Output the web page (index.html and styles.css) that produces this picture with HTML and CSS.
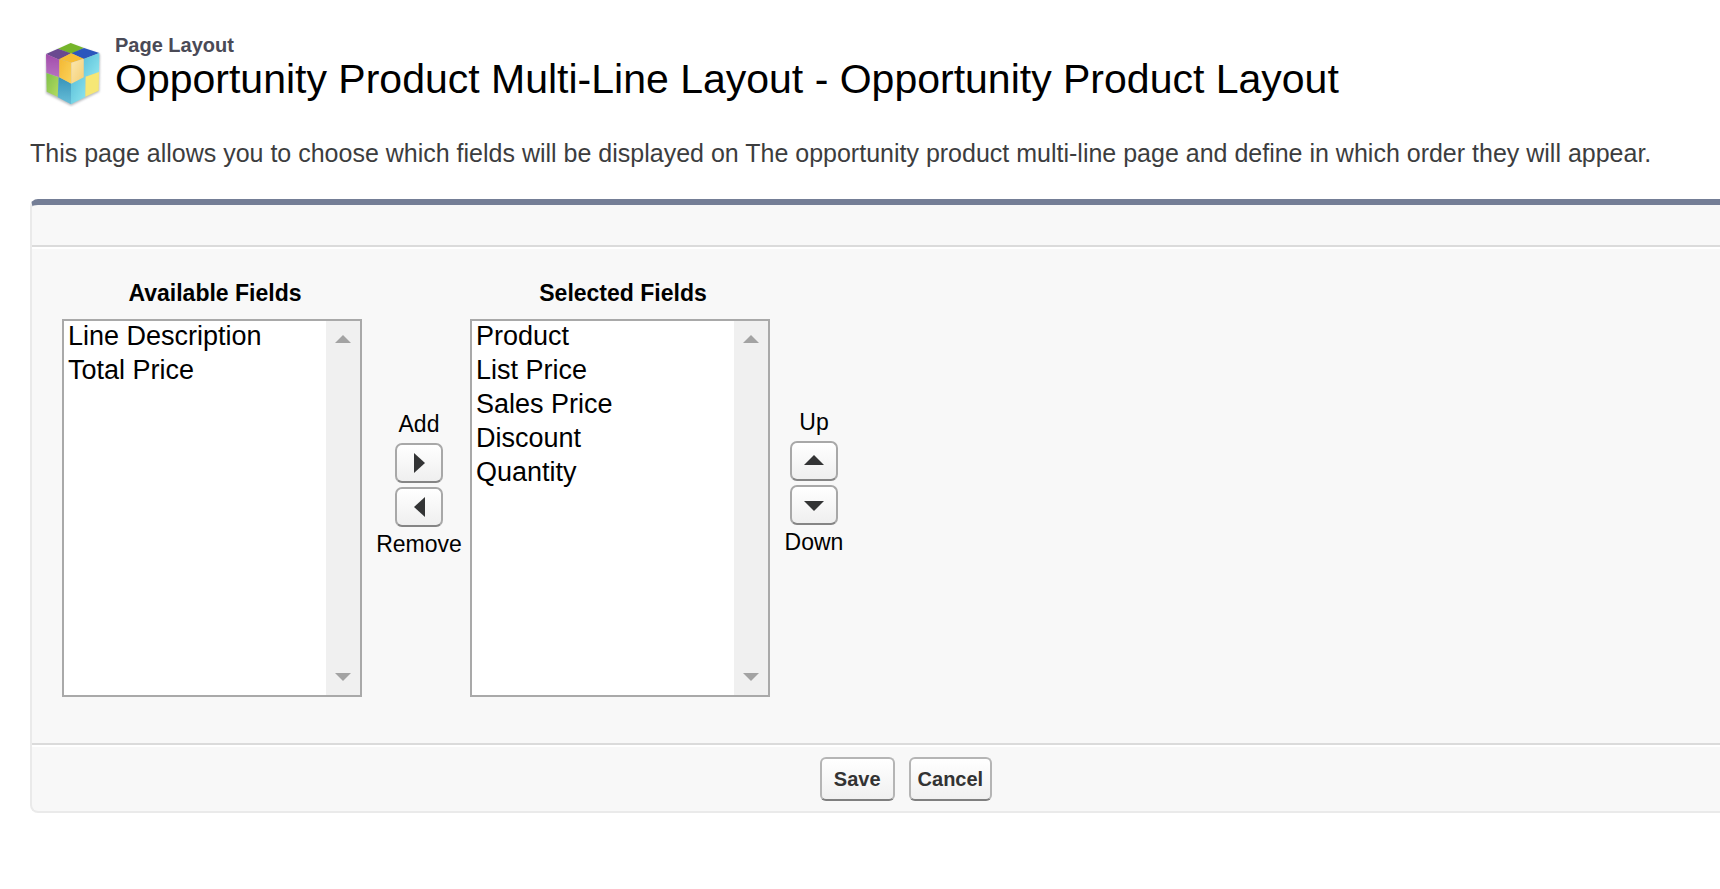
FILE: index.html
```html
<!DOCTYPE html>
<html lang="en">
<head>
    <meta charset="UTF-8">
    <meta name="viewport" content="width=device-width, initial-scale=1.0">
    <title>Page Layout</title>
    <link rel="stylesheet" href="styles.css">
</head>
<body>
    <header class="page-header">
        <svg class="page-icon" viewBox="72 62 174 198" aria-hidden="true">
            <defs>
                <linearGradient id="gold" x1="0" y1="0" x2="1" y2="1">
                    <stop offset="0" stop-color="#f3b833"/>
                    <stop offset="1" stop-color="#fbd35c"/>
                </linearGradient>
                <linearGradient id="cream" x1="0" y1="0" x2="1" y2="1">
                    <stop offset="0" stop-color="#fbe7b0"/>
                    <stop offset="1" stop-color="#f5cf72"/>
                </linearGradient>
                <linearGradient id="purple" x1="0" y1="0" x2="0" y2="1">
                    <stop offset="0" stop-color="#a24bab"/>
                    <stop offset="1" stop-color="#b672c0"/>
                </linearGradient>
                <linearGradient id="cyan" x1="0" y1="0" x2="1" y2="1">
                    <stop offset="0" stop-color="#5cc0da"/>
                    <stop offset="1" stop-color="#8fe6ef"/>
                </linearGradient>
                <linearGradient id="teal" x1="0" y1="0" x2="0" y2="1">
                    <stop offset="0" stop-color="#3893b8"/>
                    <stop offset="1" stop-color="#68bfd9"/>
                </linearGradient>
                <linearGradient id="lime" x1="0" y1="0" x2="1" y2="1">
                    <stop offset="0" stop-color="#7fc04a"/>
                    <stop offset="1" stop-color="#b5dc62"/>
                </linearGradient>
                <filter id="shadow" x="-10%" y="-10%" width="120%" height="120%">
                    <feGaussianBlur stdDeviation="3"/>
                </filter>
                <filter id="soft" x="-5%" y="-5%" width="110%" height="110%">
                    <feGaussianBlur stdDeviation="2"/>
                </filter>
            </defs>
            <path d="M78 104L152 72L240 102L238 214L153 256L78 219Z" fill="#8b8f94" opacity=".6" filter="url(#shadow)"/>
            <g filter="url(#soft)">
                <!-- top face -->
                <path d="M152 68L192 83L154 100L114 85Z" fill="#74b52c"/>
                <path d="M114 85L152 99L118 118L78 101Z" fill="#6b4a90"/>
                <path d="M192 83L238 98L191 116L154 99Z" fill="#2c57bd"/>
                <!-- left face -->
                <path d="M78 101L118 118L118 171L79 158Z" fill="url(#purple)"/>
                <path d="M79 158L116 171L114 230L80 214Z" fill="url(#lime)"/>
                <path d="M116 170L153 189L153 252L113 231Z" fill="url(#teal)"/>
                <!-- right face -->
                <path d="M191 116L238 98L237 156L191 171Z" fill="url(#cyan)"/>
                <path d="M153 189L197 168L196 230L153 252Z" fill="url(#cyan)"/>
                <path d="M197 169L237 155L236 211L196 229Z" fill="#f6e774"/>
                <!-- raised cube -->
                <path d="M154 99L191 115L154 127L118 116Z" fill="#f6bd35"/>
                <path d="M118 116L154 127L154 190L118 171Z" fill="url(#gold)"/>
                <path d="M154 127L191 115L191 171L154 190Z" fill="url(#cream)"/>
            </g>
        </svg>
        <div class="page-heading">
            <p class="page-type">Page Layout</p>
            <h1>Opportunity Product Multi-Line Layout - Opportunity Product Layout</h1>
        </div>
    </header>
    <p class="description">This page allows you to choose which fields will be displayed on The opportunity product multi-line page and define in which order they will appear.</p>

    <form class="panel" id="layout-form">
        <div class="panel-top"></div>
        <div class="panel-body">
            <div class="field-list">
                <label for="available">Available Fields</label>
                <div class="list-box">
                    <select id="available" multiple>
                        <option>Line Description</option>
                        <option>Total Price</option>
                    </select>
                    <div class="scroll-track">
                        <svg width="16" height="8" viewBox="0 0 16 8"><path d="M0 8L8 0L16 8Z"/></svg>
                        <svg width="16" height="8" viewBox="0 0 16 8"><path d="M0 0L8 8L16 0Z"/></svg>
                    </div>
                </div>
            </div>
            <div class="mover mover-side">
                <label for="add-button">Add</label>
                <button type="button" class="arrow-button" id="add-button">
                    <svg width="20" height="20" viewBox="0 0 20 20"><path d="M5 0L16 10L5 20Z"/></svg>
                </button>
                <button type="button" class="arrow-button" id="remove-button">
                    <svg width="20" height="20" viewBox="0 0 20 20"><path d="M16 0L5 10L16 20Z"/></svg>
                </button>
                <label for="remove-button">Remove</label>
            </div>
            <div class="field-list">
                <label for="selected">Selected Fields</label>
                <div class="list-box">
                    <select id="selected" multiple>
                        <option>Product</option>
                        <option>List Price</option>
                        <option>Sales Price</option>
                        <option>Discount</option>
                        <option>Quantity</option>
                    </select>
                    <div class="scroll-track">
                        <svg width="16" height="8" viewBox="0 0 16 8"><path d="M0 8L8 0L16 8Z"/></svg>
                        <svg width="16" height="8" viewBox="0 0 16 8"><path d="M0 0L8 8L16 0Z"/></svg>
                    </div>
                </div>
            </div>
            <div class="mover">
                <label for="up-button">Up</label>
                <button type="button" class="arrow-button" id="up-button">
                    <svg width="20" height="20" viewBox="0 0 20 20"><path d="M0 14L10 4L20 14Z"/></svg>
                </button>
                <button type="button" class="arrow-button" id="down-button">
                    <svg width="20" height="20" viewBox="0 0 20 20"><path d="M0 6L10 16L20 6Z"/></svg>
                </button>
                <label for="down-button">Down</label>
            </div>
        </div>
        <div class="panel-bottom">
            <button type="submit" class="btn btn-save">Save</button>
            <button type="button" class="btn">Cancel</button>
        </div>
    </form>
    <script>
        const available = document.getElementById('available');
        const selected = document.getElementById('selected');

        function moveTo(from, to) {
            [...from.selectedOptions].forEach(option => to.appendChild(option));
        }

        document.getElementById('add-button').onclick = () => moveTo(available, selected);
        document.getElementById('remove-button').onclick = () => moveTo(selected, available);

        document.getElementById('up-button').onclick = () => {
            const option = selected.selectedOptions[0];
            if (option && option.previousElementSibling) {
                option.previousElementSibling.before(option);
            }
        };

        document.getElementById('down-button').onclick = () => {
            const option = selected.selectedOptions[0];
            if (option && option.nextElementSibling) {
                option.nextElementSibling.after(option);
            }
        };

        document.getElementById('layout-form').addEventListener('submit', function(event) {
            event.preventDefault();
        });
    </script>
</body>
</html>
```
FILE: styles.css
```css
* {
    box-sizing: border-box;
}
body {
    margin: 0;
    padding: 33px 0 0 30px;
    font-family: Arial, "Liberation Sans", sans-serif;
    font-size: 23px;
    background-color: #fff;
    color: #000;
}
h1, p {
    margin: 0;
}
.page-header {
    display: flex;
    gap: 13px;
    padding-left: 14px;
}
.page-icon {
    width: 58px;
    height: 66px;
    margin-top: 8px;
}
.page-type {
    font-size: 20px;
    font-weight: bold;
    line-height: 24px;
    color: #4a4a56;
}
h1 {
    font-size: 41px;
    font-weight: normal;
    line-height: 44px;
}
.description {
    margin-top: 32px;
    font-size: 25px;
    line-height: 28px;
    color: #3c3d3e;
}
.panel {
    margin-top: 32px;
    background-color: #f8f8f8;
    border: 2px solid #eaeaea;
    border-top: 6px solid #747e96;
    border-right: none;
    border-radius: 8px 0 0 8px;
}
.panel-top {
    height: 42px;
    border-bottom: 2px solid #dbdbdb;
}
.panel-body {
    display: flex;
    align-items: center;
    padding: 31px 30px 46px;
    border-top: 2px solid #fff;
    border-bottom: 2px solid #dbdbdb;
}
.field-list label {
    display: block;
    margin-bottom: 13px;
    padding-left: 6px;
    font-weight: bold;
    line-height: 26px;
    text-align: center;
}
.list-box {
    display: flex;
    width: 300px;
    height: 378px;
    background-color: #fff;
    border: 2px solid #a9a9a9;
}
.list-box select {
    flex: 1;
    min-width: 0;
    padding: 0;
    border: none;
    outline: none;
    overflow: hidden;
    background-color: #fff;
    color: #000;
    font-family: inherit;
    font-size: 27px;
}
.list-box option {
    padding: 0 4px 3px;
    line-height: 31px;
}
.scroll-track {
    display: flex;
    flex-direction: column;
    justify-content: space-between;
    align-items: center;
    width: 34px;
    padding: 14px 0;
    background-color: #f0f0f0;
    fill: #a3a3a3;
}
.mover {
    display: flex;
    flex-direction: column;
    align-items: center;
    gap: 4px;
    width: 88px;
    padding-bottom: 14px;
    line-height: 26px;
}
.mover-side {
    width: 108px;
    padding-bottom: 10px;
    padding-left: 6px;
}
.mover label:first-child {
    margin-bottom: 2px;
}
.arrow-button {
    display: flex;
    align-items: center;
    justify-content: center;
    width: 48px;
    height: 40px;
    padding: 0;
    border: 2px solid #a8a8a8;
    border-bottom-color: #858585;
    border-radius: 7px;
    background: linear-gradient(#fff, #efefef);
    fill: #333435;
    cursor: pointer;
}
.panel-bottom {
    display: flex;
    justify-content: center;
    gap: 14px;
    padding: 10px 0 10px 60px;
    border-top: 2px solid #fff;
}
.btn {
    height: 44px;
    padding: 0 7px;
    border: 2px solid #b5b5b5;
    border-bottom-color: #7f7f7f;
    border-radius: 6px;
    background: linear-gradient(#fff, #f0f0f0);
    color: #333;
    font-family: inherit;
    font-size: 20px;
    font-weight: bold;
    cursor: pointer;
}
.btn-save {
    padding: 0 12px;
}
```
